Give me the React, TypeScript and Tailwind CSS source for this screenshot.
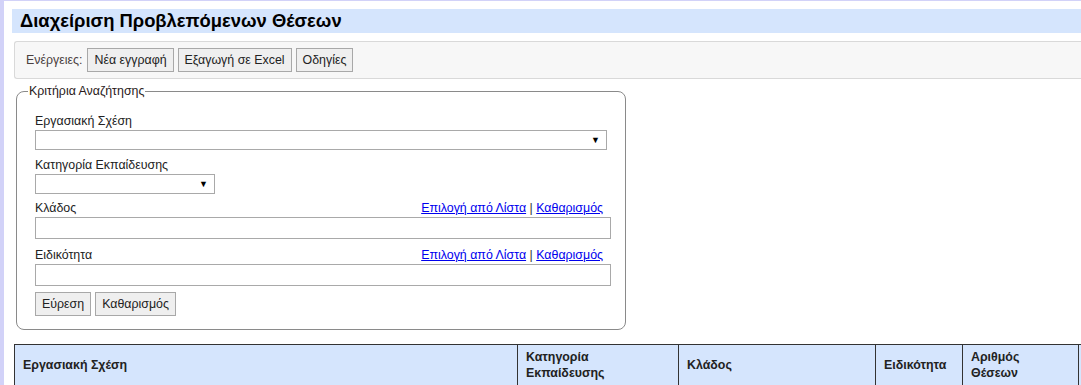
import React from "react";

const btn =
  "h-[24px] border border-[#a8a8a8] bg-[#efefef] px-[6px] text-[12.4px] leading-[22px] text-[#222]";

function FakeSelect({ w }: { w: string }) {
  return (
    <div className={`flex h-[20px] ${w} items-center justify-end border border-[#a9a9a9] bg-white pr-[6px]`}>
      <span className="text-[9px] leading-none text-black">▼</span>
    </div>
  );
}

function LinkLabel({ label }: { label: string }) {
  return (
    <div className="mb-[2px] flex w-[568px] justify-between pt-[1px] leading-[14px]">
      <span>{label}</span>
      <span>
        <a className="text-[#0000ee] underline" href="#">
          Επιλογή από Λίστα
        </a>{" "}
        <span className="text-[#333]">|</span>{" "}
        <a className="text-[#0000ee] underline" href="#">
          Καθαρισμός
        </a>
      </span>
    </div>
  );
}

export default function App() {
  return (
    <div className="min-h-[385px] w-[1081px] overflow-hidden border-l-4 border-t border-[#d2d2f8] bg-white pl-2 pt-2 font-['Liberation_Sans',Arial,sans-serif] text-[12.4px] text-[#222]">
      <div className="h-[24px] bg-[#d5e5fd] pl-2 text-[18.4px] font-bold leading-[24px] text-black">
        Διαχείριση Προβλεπόμενων Θέσεων
      </div>

      <div className="ml-[2px] mt-2 flex h-[38px] items-center gap-[4px] rounded-l-[3px] border border-r-0 border-[#d9d9d9] bg-[#f7f7f7] pl-[11px]">
        <span className="mr-[1px] text-[#4a4040]">Ενέργειες:</span>
        <button className={btn}>Νέα εγγραφή</button>
        <button className={btn}>Εξαγωγή σε Excel</button>
        <button className={btn}>Οδηγίες</button>
      </div>

      <fieldset className="ml-1 mt-[5px] w-[610px] rounded-[8px] border border-[#8a8a8a] pb-[13px] pl-[18px] pr-[13px] pt-[15px]">
        <legend className="ml-[-7px] px-[1px] leading-[14px] text-[#2a1a1a]">Κριτήρια Αναζήτησης</legend>

        <div className="mb-[2px] pt-[1px] leading-[14px]">Εργασιακή Σχέση</div>
        <FakeSelect w="w-[572px]" />

        <div className="mb-[2px] mt-[7px] pt-[1px] leading-[14px]">Κατηγορία Εκπαίδευσης</div>
        <FakeSelect w="w-[180px]" />

        <div className="mt-[6px]">
          <LinkLabel label="Κλάδος" />
        </div>
        <div className="h-[22px] w-[576px] border border-[#a9a9a9] bg-white" />

        <div className="mt-[8px]">
          <LinkLabel label="Ειδικότητα" />
        </div>
        <div className="h-[22px] w-[576px] border border-[#a9a9a9] bg-white" />

        <div className="mt-[6px] flex gap-[4px]">
          <button className={btn}>Εύρεση</button>
          <button className={btn}>Καθαρισμός</button>
        </div>
      </fieldset>

      <table className="ml-[2px] mt-[14px] w-[1170px] table-fixed border-collapse">
        <colgroup>
          <col className="w-[503px]" />
          <col className="w-[161px]" />
          <col className="w-[197px]" />
          <col className="w-[87px]" />
          <col className="w-[116px]" />
          <col className="w-[106px]" />
        </colgroup>
        <thead>
          <tr className="h-[41px] bg-[#d5e5fd] text-left">
            <th className="border border-[#333] px-2 font-bold leading-[16px] text-[#222]">Εργασιακή Σχέση</th>
            <th className="border border-[#333] px-2 font-bold leading-[16px] text-[#222]">
              Κατηγορία
              <br />
              Εκπαίδευσης
            </th>
            <th className="border border-[#333] px-2 font-bold leading-[16px] text-[#222]">Κλάδος</th>
            <th className="border border-[#333] px-2 font-bold leading-[16px] text-[#222]">Ειδικότητα</th>
            <th className="border border-[#333] px-2 font-bold leading-[16px] text-[#222]">
              Αριθμός
              <br />
              Θέσεων
            </th>
            <th className="border border-[#333] px-2 font-bold leading-[16px] text-[#222]"></th>
          </tr>
        </thead>
      </table>
    </div>
  );
}
